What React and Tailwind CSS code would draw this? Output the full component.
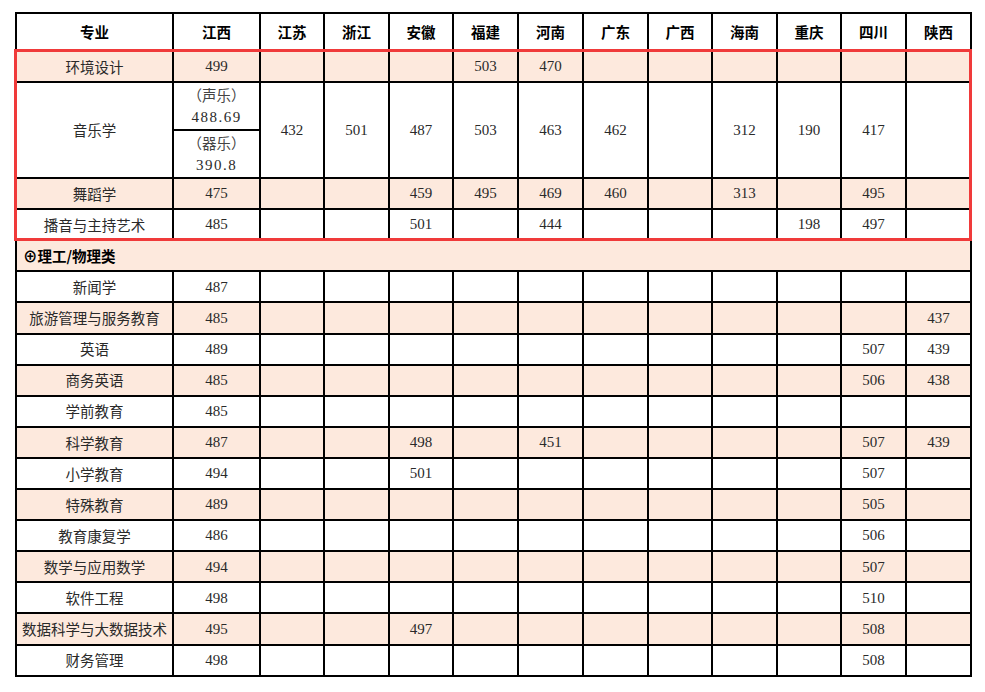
import React from 'react';

const provinces = ['江西', '江苏', '浙江', '安徽', '福建', '河南', '广东', '广西', '海南', '重庆', '四川', '陕西'];

// each row: [name, ...12 scores]
const artRows = [
    { name: '环境设计', v: ['499', '', '', '', '503', '470', '', '', '', '', '', ''], pink: true },
];
const artRowsAfter = [
    { name: '舞蹈学', v: ['475', '', '', '459', '495', '469', '460', '', '313', '', '495', ''], pink: true },
    { name: '播音与主持艺术', v: ['485', '', '', '501', '', '444', '', '', '', '198', '497', ''], pink: false },
];
const scienceRows = [
    { name: '新闻学', v: ['487', '', '', '', '', '', '', '', '', '', '', ''] },
    { name: '旅游管理与服务教育', v: ['485', '', '', '', '', '', '', '', '', '', '', '437'] },
    { name: '英语', v: ['489', '', '', '', '', '', '', '', '', '', '507', '439'] },
    { name: '商务英语', v: ['485', '', '', '', '', '', '', '', '', '', '506', '438'] },
    { name: '学前教育', v: ['485', '', '', '', '', '', '', '', '', '', '', ''] },
    { name: '科学教育', v: ['487', '', '', '498', '', '451', '', '', '', '', '507', '439'] },
    { name: '小学教育', v: ['494', '', '', '501', '', '', '', '', '', '', '507', ''] },
    { name: '特殊教育', v: ['489', '', '', '', '', '', '', '', '', '', '505', ''] },
    { name: '教育康复学', v: ['486', '', '', '', '', '', '', '', '', '', '506', ''] },
    { name: '数学与应用数学', v: ['494', '', '', '', '', '', '', '', '', '', '507', ''] },
    { name: '软件工程', v: ['498', '', '', '', '', '', '', '', '', '', '510', ''] },
    { name: '数据科学与大数据技术', v: ['495', '', '', '497', '', '', '', '', '', '', '508', ''] },
    { name: '财务管理', v: ['498', '', '', '', '', '', '', '', '', '', '508', ''] },
];

const cell = 'border-2 border-black text-center align-middle p-0';

const ScoreRow = ({ row, pink }) => (
    <tr className={`h-[31.1px] ${pink ? 'bg-[#fde9dd]' : 'bg-white'}`}>
        <td className={`${cell} whitespace-nowrap`}>{row.name}</td>
        {row.v.map((s, i) => (
            <td key={i} className={`${cell} font-['Liberation_Serif',serif] text-[15px]`}>{s}</td>
        ))}
    </tr>
);

const App = () => {
    const music = ['432', '501', '487', '503', '463', '462', '', '312', '190', '417', ''];

    return (
        <div className="bg-white w-[985px] h-[692px] pl-[15px] pt-[12px] font-['Noto_Sans_CJK_SC',sans-serif] text-[14.5px] text-[#2a2a2a]">
            <div className="relative w-[957px]">
                <table className="table-fixed border-collapse w-[957px]">
                    <colgroup>
                        <col className="w-[157px]" />
                        <col className="w-[87px]" />
                        <col className="w-[64px]" />
                        <col className="w-[65px]" />
                        <col className="w-[64px]" />
                        <col className="w-[65px]" />
                        <col className="w-[65px]" />
                        <col className="w-[65px]" />
                        <col className="w-[64px]" />
                        <col className="w-[65px]" />
                        <col className="w-[64px]" />
                        <col className="w-[65px]" />
                        <col className="w-[65px]" />
                    </colgroup>
                    <thead>
                        <tr className="h-[38px] bg-white">
                            <th className={`${cell} font-bold text-black`}>专业</th>
                            {provinces.map((p) => (
                                <th key={p} className={`${cell} font-bold text-black`}>{p}</th>
                            ))}
                        </tr>
                    </thead>
                    <tbody>
                        {artRows.map((r) => <ScoreRow key={r.name} row={r} pink={r.pink} />)}

                        {/* 音乐学: split cell for 声乐 / 器乐 */}
                        <tr className="h-[48px] bg-white">
                            <td rowSpan={2} className={cell}>音乐学</td>
                            <td className={`${cell} leading-[23px]`}>
                                <div className="text-[#444]">（声乐）</div>
                                <div className="font-['Liberation_Serif',serif] text-[15px] tracking-[1.5px]">488.69</div>
                            </td>
                            {music.map((s, i) => (
                                <td key={i} rowSpan={2} className={`${cell} font-['Liberation_Serif',serif] text-[15px]`}>{s}</td>
                            ))}
                        </tr>
                        <tr className="h-[47px] bg-white">
                            <td className={`${cell} leading-[23px]`}>
                                <div className="text-[#444]">（器乐）</div>
                                <div className="font-['Liberation_Serif',serif] text-[15px] tracking-[1.5px]">390.8</div>
                            </td>
                        </tr>

                        {artRowsAfter.map((r) => <ScoreRow key={r.name} row={r} pink={r.pink} />)}

                        <tr className="h-[31.1px] bg-[#fde9dd]">
                            <td colSpan={13} className="border-2 border-black text-left pl-[6px] font-bold text-black">
                                ⊕理工/物理类
                            </td>
                        </tr>

                        {scienceRows.map((r, i) => <ScoreRow key={r.name} row={r} pink={i % 2 === 1} />)}
                    </tbody>
                </table>

                {/* red highlight box over the art rows */}
                <div className="absolute left-[-1px] top-[37px] w-[958px] h-[192px] border-[3px] border-[#f03a3a] pointer-events-none"></div>
            </div>
        </div>
    );
};

export default App;
